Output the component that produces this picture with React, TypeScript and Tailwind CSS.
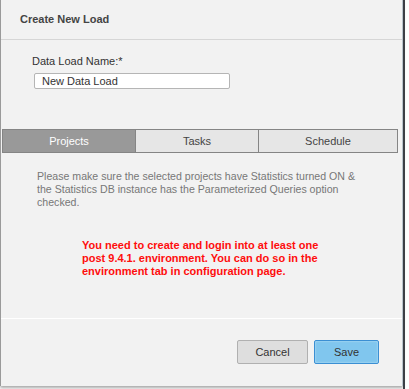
export default function App() {
  const tabs = ["Projects", "Tasks", "Schedule"];
  return (
    <div className="w-[409px] h-[389px] bg-white flex font-['Liberation_Sans',Arial,sans-serif]">
      <div className="w-[403px] h-[386px] bg-[#f2f2f2] border-l border-[#9a9a9a] border-r border-r-[#b9c3cc] shadow-[0_2px_3px_rgba(0,0,0,0.35)] flex flex-col">
        <div className="h-[40px] border-b border-[#d6d6d6] pl-[19px] flex items-center">
          <span className="text-[11px] font-bold text-[#444]">Create New Load</span>
        </div>

        <div className="pt-[15px] pl-[31px]">
          <p className="text-[11px] leading-[13px] text-[#333]">Data Load Name:*</p>
          <div className="mt-[5px] ml-[2px] w-[196px] h-[16px] bg-white border border-[#b5b5b5] rounded-[2px] pl-[7px] flex items-center">
            <span className="text-[11px] text-[#333]">New Data Load</span>
          </div>
        </div>

        <div className="mt-[40px] ml-[1px] flex w-[396px] h-[24px]">
          {tabs.map((t, i) => (
            <div
              key={t}
              className={
                i === 0
                  ? "w-[134px] bg-[#999999] border border-[#858585] text-white text-[11px] flex items-center justify-center"
                  : i === 1
                  ? "w-[123px] bg-[#e6e6e6] border border-l-0 border-[#858585] text-[#444] text-[11px] flex items-center justify-center"
                  : "w-[139px] bg-[#e6e6e6] border border-l-0 border-[#858585] text-[#444] text-[11px] flex items-center justify-center"
              }
            >
              {t}
            </div>
          ))}
        </div>

        <p className="mt-[17px] pl-[36px] text-[10.6px] leading-[13px] text-[#777]">
          Please make sure the selected projects have Statistics turned ON &amp;
          <br />
          the Statistics DB instance has the Parameterized Queries option
          <br />
          checked.
        </p>

        <p className="mt-[30px] pl-[81px] text-[11px] leading-[13px] font-bold text-[#ff0d0d]">
          You need to create and login into at least one
          <br />
          post 9.4.1. environment. You can do so in the
          <br />
          environment tab in configuration page.
        </p>

        <div className="mt-[40px] h-px bg-white" />

        <div className="mt-[21px] flex justify-end gap-[6px] pr-[23px]">
          <button className="w-[71px] h-[24px] bg-[#dedede] border border-[#b0b0b0] rounded-[2px] text-[11px] text-[#333]">
            Cancel
          </button>
          <button className="w-[65px] h-[24px] bg-[#80c6ee] border border-[#3b8fd3] rounded-[2px] text-[11px] text-[#333] shadow-[inset_0_0_2px_rgba(255,255,255,0.6)]">
            Save
          </button>
        </div>
      </div>
      <div className="w-[2px] h-full bg-[#3c3f46]" />
    </div>
  );
}
